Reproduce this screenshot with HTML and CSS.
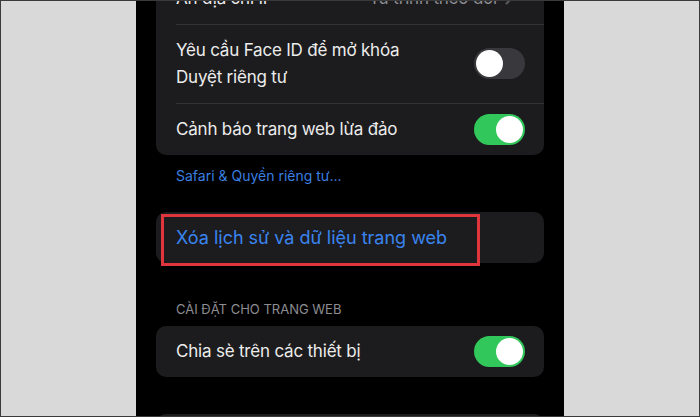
FILE: index.html
```html
<!DOCTYPE html>
<html lang="vi">
<head>
<meta charset="utf-8">
<title>Safari</title>
<link rel="stylesheet" href="styles.css">
</head>
<body>
<div class="frame">
  <div class="side"></div>
  <div class="phone">
    <div class="scroll">
      <div class="card">
        <div class="row row-first">
          <span class="label">Ẩn địa chỉ IP</span>
          <span class="value">Từ trình theo dõi <svg class="chev" width="8" height="13" viewBox="0 0 8 13"><path d="M1.5 1.5 L6.5 6.5 L1.5 11.5" fill="none" stroke="#5a5a5f" stroke-width="2" stroke-linecap="round" stroke-linejoin="round"/></svg></span>
        </div>
        <div class="row row-two">
          <span class="label">Yêu cầu Face ID để mở khóa<br>Duyệt riêng tư</span>
          <span class="toggle"><span class="knob"></span></span>
        </div>
        <div class="row row-last">
          <span class="label">Cảnh báo trang web lừa đảo</span>
          <span class="toggle on"><span class="knob"></span></span>
        </div>
      </div>
      <div class="footer-link">Safari &amp; Quyền riêng tư...</div>
      <div class="card card-clear">
        <div class="row single">
          <span class="label blue">Xóa lịch sử và dữ liệu trang web</span>
        </div>
        <div class="highlight"></div>
      </div>
      <div class="section-header">CÀI ĐẶT CHO TRANG WEB</div>
      <div class="card">
        <div class="row single">
          <span class="label">Chia sè trên các thiết bị</span>
          <span class="toggle on"><span class="knob"></span></span>
        </div>
      </div>
      <div class="card card-next"></div>
    </div>
  </div>
  <div class="side"></div>
</div>
</body>
</html>
```

FILE: styles.css
```css
html, body {
  margin: 0;
  padding: 0;
}
body {
  width: 700px;
  height: 417px;
  overflow: hidden;
  font-family: Inter, "Noto Sans", "Liberation Sans", sans-serif;
}
.frame {
  box-sizing: border-box;
  width: 700px;
  height: 417px;
  border: 1px solid #3a3a3a;
  display: flex;
  overflow: hidden;
  background: #d9d9d9;
}
.side {
  flex: 1;
  background: #d9d9d9;
}
.phone {
  width: 428px;
  background: #000;
  overflow: hidden;
}
.scroll {
  margin-top: -28px;
  padding: 0 20px;
}
.card {
  background: #1c1c1e;
  border-radius: 10px;
  position: relative;
}
.row {
  display: flex;
  align-items: center;
  justify-content: space-between;
  padding: 0 19px 0 20px;
  position: relative;
  color: #ececec;
  font-size: 17px;
  line-height: 27px;
}
.row + .row::before {
  content: "";
  position: absolute;
  top: 0;
  left: 20px;
  right: 0;
  height: 1px;
  background: #333335;
}
.row-first { height: 51px; }
.row-two { height: 79px; }
.row-last { height: 52px; }
.single { height: 51px; }
.label {
  letter-spacing: -0.2px;
}
.value {
  color: #8e8e93;
  display: flex;
  align-items: center;
  gap: 8px;
  padding-right: 12px;
  letter-spacing: -0.2px;
}
.blue {
  color: #3a84f0;
  font-size: 18px;
  letter-spacing: 0;
}
.toggle {
  width: 51px;
  height: 31px;
  border-radius: 16px;
  background: #39393d;
  position: relative;
  flex: none;
}
.toggle .knob {
  position: absolute;
  top: 2px;
  left: 2px;
  width: 27px;
  height: 27px;
  border-radius: 50%;
  background: #fff;
}
.toggle.on {
  background: #32c75a;
}
.toggle.on .knob {
  left: 22px;
}
.footer-link {
  color: #3a7fe0;
  font-size: 14px;
  line-height: 16px;
  padding: 13px 20px 0;
  margin-bottom: 28px;
}
.section-header {
  color: #8d8d92;
  font-size: 13px;
  line-height: 16px;
  padding: 0 20px;
  margin-top: 38px;
  margin-bottom: 9px;
}
.highlight {
  position: absolute;
  left: 5px;
  top: 2px;
  width: 319px;
  height: 52px;
  box-sizing: border-box;
  border: 3px solid #e0353c;
}
.card-next {
  margin-top: 37px;
  height: 40px;
}
```
